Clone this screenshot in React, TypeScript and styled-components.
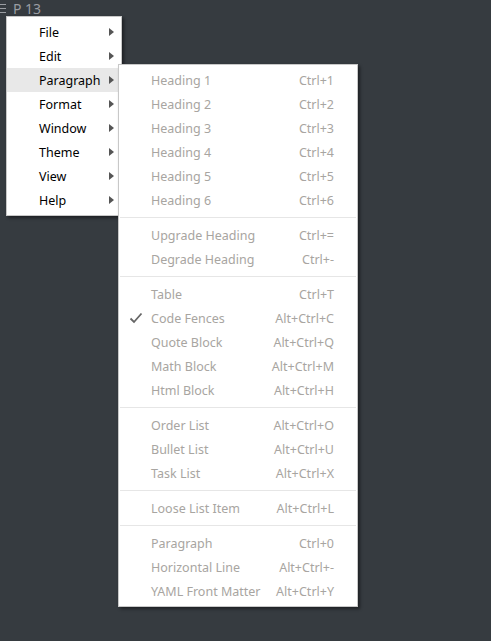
import React from "react";
import styled, { createGlobalStyle } from "styled-components";

const Global = createGlobalStyle`
  html, body { margin: 0; padding: 0; background: #363b40; }
  body { font-family: "Noto Sans", "Open Sans", sans-serif; width: 491px; height: 641px; overflow: hidden; }
`;

const Page = styled.div`
  position: relative;
  width: 491px;
  height: 641px;
  background: #363b40;
`;

const TopBar = styled.div`
  display: flex;
  align-items: center;
  gap: 7px;
  height: 15px;
  padding-top: 1px;
  color: #9a9da2;
  font-size: 14px;
  line-height: 14px;
`;

const Burger = styled.span`
  display: flex;
  flex-direction: column;
  justify-content: space-between;
  width: 6px;
  height: 9px;
  & > i { display: block; height: 1px; background: #9a9da2; }
`;

const Menu = styled.div<{ $left: number; $top: number; $width: number }>`
  position: absolute;
  left: ${(p) => p.$left}px;
  top: ${(p) => p.$top}px;
  width: ${(p) => p.$width}px;
  box-sizing: border-box;
  background: #fff;
  border: 1px solid #c8c8c8;
  padding: 3px 0;
  box-shadow: 2px 2px 3px rgba(0, 0, 0, 0.45);
  font-size: 12.5px;
`;

const MainItem = styled.div<{ $active?: boolean }>`
  display: flex;
  align-items: center;
  height: 24px;
  padding-left: 32px;
  padding-right: 7px;
  color: #000;
  background: ${(p) => (p.$active ? "#e8e8e8" : "transparent")};
`;

const Label = styled.span`
  flex: 1;
  white-space: nowrap;
`;

const Arrow = styled.span`
  width: 0;
  height: 0;
  border-top: 4px solid transparent;
  border-bottom: 4px solid transparent;
  border-left: 5px solid #555;
`;

const SubItem = styled.div`
  position: relative;
  display: flex;
  align-items: center;
  height: 24px;
  padding-left: 32px;
  padding-right: 23px;
  color: #a8a5a1;
`;

const Shortcut = styled.span`
  white-space: nowrap;
`;

const Check = styled.svg`
  position: absolute;
  left: 10px;
  top: 6px;
`;

const Separator = styled.div`
  height: 1px;
  margin: 5px 1px;
  background: #e6e6e6;
`;

const mainItems = ["File", "Edit", "Paragraph", "Format", "Window", "Theme", "View", "Help"];

type Entry = { label: string; key: string; checked?: boolean } | "sep";

const subItems: Entry[] = [
  { label: "Heading 1", key: "Ctrl+1" },
  { label: "Heading 2", key: "Ctrl+2" },
  { label: "Heading 3", key: "Ctrl+3" },
  { label: "Heading 4", key: "Ctrl+4" },
  { label: "Heading 5", key: "Ctrl+5" },
  { label: "Heading 6", key: "Ctrl+6" },
  "sep",
  { label: "Upgrade Heading", key: "Ctrl+=" },
  { label: "Degrade Heading", key: "Ctrl+-" },
  "sep",
  { label: "Table", key: "Ctrl+T" },
  { label: "Code Fences", key: "Alt+Ctrl+C", checked: true },
  { label: "Quote Block", key: "Alt+Ctrl+Q" },
  { label: "Math Block", key: "Alt+Ctrl+M" },
  { label: "Html Block", key: "Alt+Ctrl+H" },
  "sep",
  { label: "Order List", key: "Alt+Ctrl+O" },
  { label: "Bullet List", key: "Alt+Ctrl+U" },
  { label: "Task List", key: "Alt+Ctrl+X" },
  "sep",
  { label: "Loose List Item", key: "Alt+Ctrl+L" },
  "sep",
  { label: "Paragraph", key: "Ctrl+0" },
  { label: "Horizontal Line", key: "Alt+Ctrl+-" },
  { label: "YAML Front Matter", key: "Alt+Ctrl+Y" },
];

export default function App() {
  return (
    <Page>
      <Global />
      <TopBar>
        <Burger>
          <i />
          <i />
          <i />
        </Burger>
        <span>P 13</span>
      </TopBar>
      <Menu $left={6} $top={16} $width={116}>
        {mainItems.map((m) => (
          <MainItem key={m} $active={m === "Paragraph"}>
            <Label>{m}</Label>
            <Arrow />
          </MainItem>
        ))}
      </Menu>
      <Menu $left={118} $top={64} $width={240}>
        {subItems.map((s, i) =>
          s === "sep" ? (
            <Separator key={i} />
          ) : (
            <SubItem key={i}>
              {s.checked && (
                <Check width="14" height="12" viewBox="0 0 14 12">
                  <path d="M1.5 6.5 L5 10 L12.5 1.5" fill="none" stroke="#666" strokeWidth="1.8" />
                </Check>
              )}
              <Label>{s.label}</Label>
              <Shortcut>{s.key}</Shortcut>
            </SubItem>
          )
        )}
      </Menu>
    </Page>
  );
}
